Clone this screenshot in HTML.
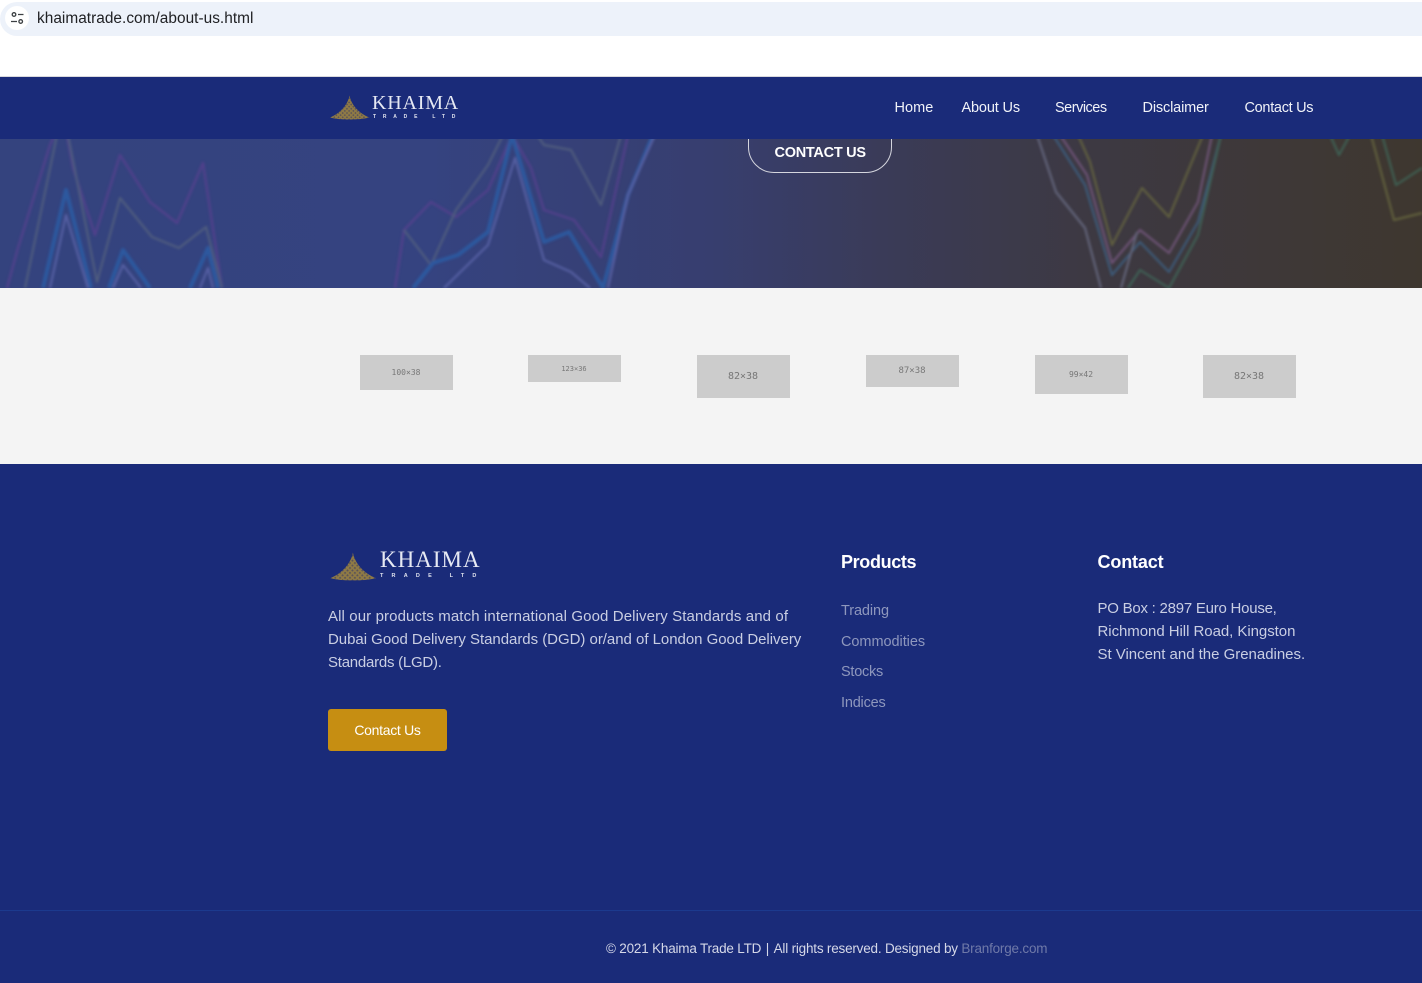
<!DOCTYPE html>
<html lang="en"><head><meta charset="utf-8"><title>Khaima Trade</title>
<style>
html,body{margin:0;padding:0;background:#fff}
body{position:relative;width:1422px;height:983px;overflow:hidden;font-family:"Liberation Sans",sans-serif}
.a{position:absolute;white-space:nowrap}
.nav{top:100px;font-size:14.5px;line-height:17px;color:#f0f2f8;letter-spacing:-.25px}
.ph{position:absolute;background:#ccc;width:93px;display:flex;align-items:center;justify-content:center;color:#777;font-family:"DejaVu Sans Mono","Liberation Mono",monospace}
.p{font-size:15px;line-height:23px;color:#c9cee3}
.p span{display:block}
.l{font-size:14.5px;line-height:17px;color:#8e97bd;letter-spacing:-.1px}
h4{position:absolute;margin:0;font-size:18px;line-height:21px;color:#fff;font-weight:bold;white-space:nowrap;letter-spacing:-.1px}
.k{font-family:"Liberation Serif",serif;color:#e6e9f3}
</style></head><body>
<div class="a" style="left:0;top:2px;width:1422px;height:34px;background:#edf2fa;border-radius:17px 0 0 17px"></div>
<svg class="a" style="left:5px;top:6px" width="24" height="24" viewBox="0 0 24 24"><circle cx="12" cy="12" r="12" fill="#fff"/><g fill="none" stroke="#3c4043" stroke-width="1.3"><circle cx="9" cy="8.5" r="1.8"/><path d="M13 8.5h5.5M6 15.5h6"/><circle cx="15.7" cy="15.5" r="1.8"/></g></svg>
<div class="a" style="left:37px;top:10px;font-size:15.4px;line-height:18px;color:#202124;letter-spacing:.03px">khaimatrade.com/about-us.html</div>

<div class="a" style="left:0;top:76px;width:1422px;height:1px;background:#d9d9de"></div>
<div class="a" style="left:0;top:139px;width:1422px;height:149px;overflow:hidden;background:linear-gradient(90deg,#34437e 0%,#354380 30%,#373e6f 50%,#3a3b58 62%,#3d3943 76%,#3e372f 100%)">
<svg width="1422" height="149" viewBox="0 139 1422 149" style="position:absolute;left:0;top:0"><defs><filter id="b" filterUnits="userSpaceOnUse" x="-20" y="100" width="1470" height="220"><feGaussianBlur stdDeviation="1.2"/></filter></defs>
<g fill="none" filter="url(#b)" stroke-linejoin="round" opacity=".78">
<g stroke="#58408f" stroke-width="2.4">
<path d="M7 288L18 248L50 145L57 130L66 130L73 168L95 235L120 155L150 202L177 223L203 163L222 288"/>
<path d="M395 288L404 230L431 202L456 217L488 190L512 135L531 168L544 210L574 220L601 257L628 135"/></g>
<g stroke="#56637f" stroke-width="2.2">
<path d="M25 288L57 135M68 135L97 282L120 198L152 237L179 248L206 227L222 288"/>
<path d="M404 230L431 265L456 210L488 165L503 135M537 135L544 145L571 150L601 205L621 135"/></g>
<g stroke="#2a5ea8" stroke-width="4">
<path d="M43 288L66 190L91 288M109 288L123 250L150 288M190 288L208 248L218 288"/>
<path d="M413 288L433 263L458 255L488 232L512 135L544 242L569 232L603 288L628 195L653 135"/></g>
<g stroke="#5f67ad" stroke-width="2.2">
<path d="M50 288L66 215L88 288M113 288L123 265L141 288M200 288L208 268L213 288"/>
<path d="M444 288L488 245L515 158L544 260L571 272L590 288M608 288L628 195L655 135"/></g>
<g stroke="#6a6a3f" stroke-width="2.2"><path d="M1078 135L1090 162L1112 245L1142 188L1169 217L1203 135M1371 135L1394 220L1422 213"/></g>
<g stroke="#7a5a84" stroke-width="2.2"><path d="M1060 135L1087 175L1112 263L1140 230L1169 253L1198 202L1212 135"/></g>
<g stroke="#3d6488" stroke-width="2.2"><path d="M1053 135L1085 185L1112 275L1140 242L1169 272L1198 222L1221 135"/></g>
<g stroke="#6c7088" stroke-width="2.2"><path d="M1037 135L1056 192L1085 228L1101 288M1121 288L1137 232"/></g>
<g stroke="#3f6a5c" stroke-width="2.2"><path d="M1128 288L1140 270L1169 288L1198 235L1221 135M1382 135L1396 185L1422 168M1330 135L1339 155L1350 135"/></g>
</g></svg>
<div style="position:absolute;left:748px;top:-40px;width:142px;height:72px;border:1px solid #d5d6de;border-radius:26px"></div>
<div class="a" style="left:774.500px;top:5px;font-size:14.5px;line-height:17px;font-weight:bold;color:#fff;letter-spacing:-.27px;margin-top:0.500px">CONTACT US</div>
</div>

<div class="a" style="left:0;top:77px;width:1422px;height:62px;background:#1a2b79"></div>
<svg class="a" style="left:330px;top:95px" width="40" height="25" viewBox="0 0 40 25"><defs><pattern id="d" width="3" height="3" patternUnits="userSpaceOnUse" patternTransform="rotate(45)"><rect width="3" height="3" fill="#8f7a45"/><rect width="1.5" height="1.5" fill="#5a5358"/></pattern></defs><path d="M19.500 0.500C21 9 28 18 39.500 22.500C33 24 27 24.500 19.500 24.500C12 24.500 6 24 0 22.500C11 18 18 9 19.500 0.500Z" fill="url(#d)"/></svg>
<div class="a k" style="left:372px;top:91px;font-size:20px;line-height:25px;letter-spacing:.8px">KHAIMA</div>
<div class="a" style="left:373px;top:113.500px;font-size:5px;line-height:6px;font-weight:bold;color:#dfe2ee;letter-spacing:6.8px">TRADE LTD</div>
<div class="a nav" style="left:894.500px;letter-spacing:.05px">Home</div>
<div class="a nav" style="left:961.500px;letter-spacing:-.15px">About Us</div>
<div class="a nav" style="left:1055px;letter-spacing:-.5px">Services</div>
<div class="a nav" style="left:1142.500px;letter-spacing:-.15px">Disclaimer</div>
<div class="a nav" style="left:1244.500px;letter-spacing:-.3px">Contact Us</div>

<div class="a" style="left:0;top:288px;width:1422px;height:176px;background:#f4f4f4"></div>
<div class="ph" style="left:359.500px;top:355px;height:35px;font-size:8px">100×38</div>
<div class="ph" style="left:527.500px;top:355px;height:27px;font-size:7px">123×36</div>
<div class="ph" style="left:696.500px;top:355px;height:43px;font-size:10px">82×38</div>
<div class="ph" style="left:865.500px;top:355px;height:32px;font-size:9px">87×38</div>
<div class="ph" style="left:1034.500px;top:355px;height:39px;font-size:8px">99×42</div>
<div class="ph" style="left:1202.500px;top:355px;height:43px;font-size:10px">82×38</div>

<div class="a" style="left:0;top:464px;width:1422px;height:519px;background:#1a2b79"></div>
<svg class="a" style="left:330px;top:552px" width="47" height="29" viewBox="0 0 40 25"><path d="M19.500 0.500C21 9 28 18 39.500 22.500C33 24 27 24.500 19.500 24.500C12 24.500 6 24 0 22.500C11 18 18 9 19.500 0.500Z" fill="url(#d)"/></svg>
<div class="a k" style="left:380px;top:545px;font-size:23px;line-height:30px;letter-spacing:1px">KHAIMA</div>
<div class="a" style="left:380px;top:573px;font-size:5.500px;line-height:6px;font-weight:bold;color:#dfe2ee;letter-spacing:8.200px">TRADE LTD</div>
<div class="a p" style="left:328px;top:605px"><span style="letter-spacing:.11px">All our products match international Good Delivery Standards and of</span><span style="letter-spacing:-.03px">Dubai Good Delivery Standards (DGD) or/and of London Good Delivery</span><span style="letter-spacing:-.24px">Standards (LGD).</span></div>
<div class="a" style="left:328px;top:709px;width:119px;height:42px;background:#c68e12;border-radius:3px;color:#fff;font-size:14px;line-height:42px;text-align:center;letter-spacing:-.3px">Contact Us</div>
<h4 style="left:841px;top:552px;letter-spacing:-.35px">Products</h4>
<h4 style="left:1097.500px;top:552px;letter-spacing:-.15px">Contact</h4>
<div class="a l" style="left:841px;top:603px">Trading</div>
<div class="a l" style="left:841px;top:634px;letter-spacing:-.05px">Commodities</div>
<div class="a l" style="left:841px;top:664px;letter-spacing:-.25px">Stocks</div>
<div class="a l" style="left:841px;top:695px;letter-spacing:-.2px">Indices</div>
<div class="a p" style="left:1097.500px;top:597px"><span style="letter-spacing:-.24px">PO Box : 2897 Euro House,</span><span style="letter-spacing:-.05px">Richmond Hill Road, Kingston</span><span style="letter-spacing:-.02px">St Vincent and the Grenadines.</span></div>
<div class="a" style="left:0;top:910px;width:1422px;height:1px;background:#1c3a8e"></div>
<div class="a" style="left:606px;top:940px;font-size:13.500px;line-height:17px;color:#d5d8e8;letter-spacing:-.2px">© 2021 Khaima Trade LTD<span style="margin:0 1px"> | </span>All rights reserved. Designed by <span style="color:#6f79a8">Branforge.com</span></div>
</body></html>
